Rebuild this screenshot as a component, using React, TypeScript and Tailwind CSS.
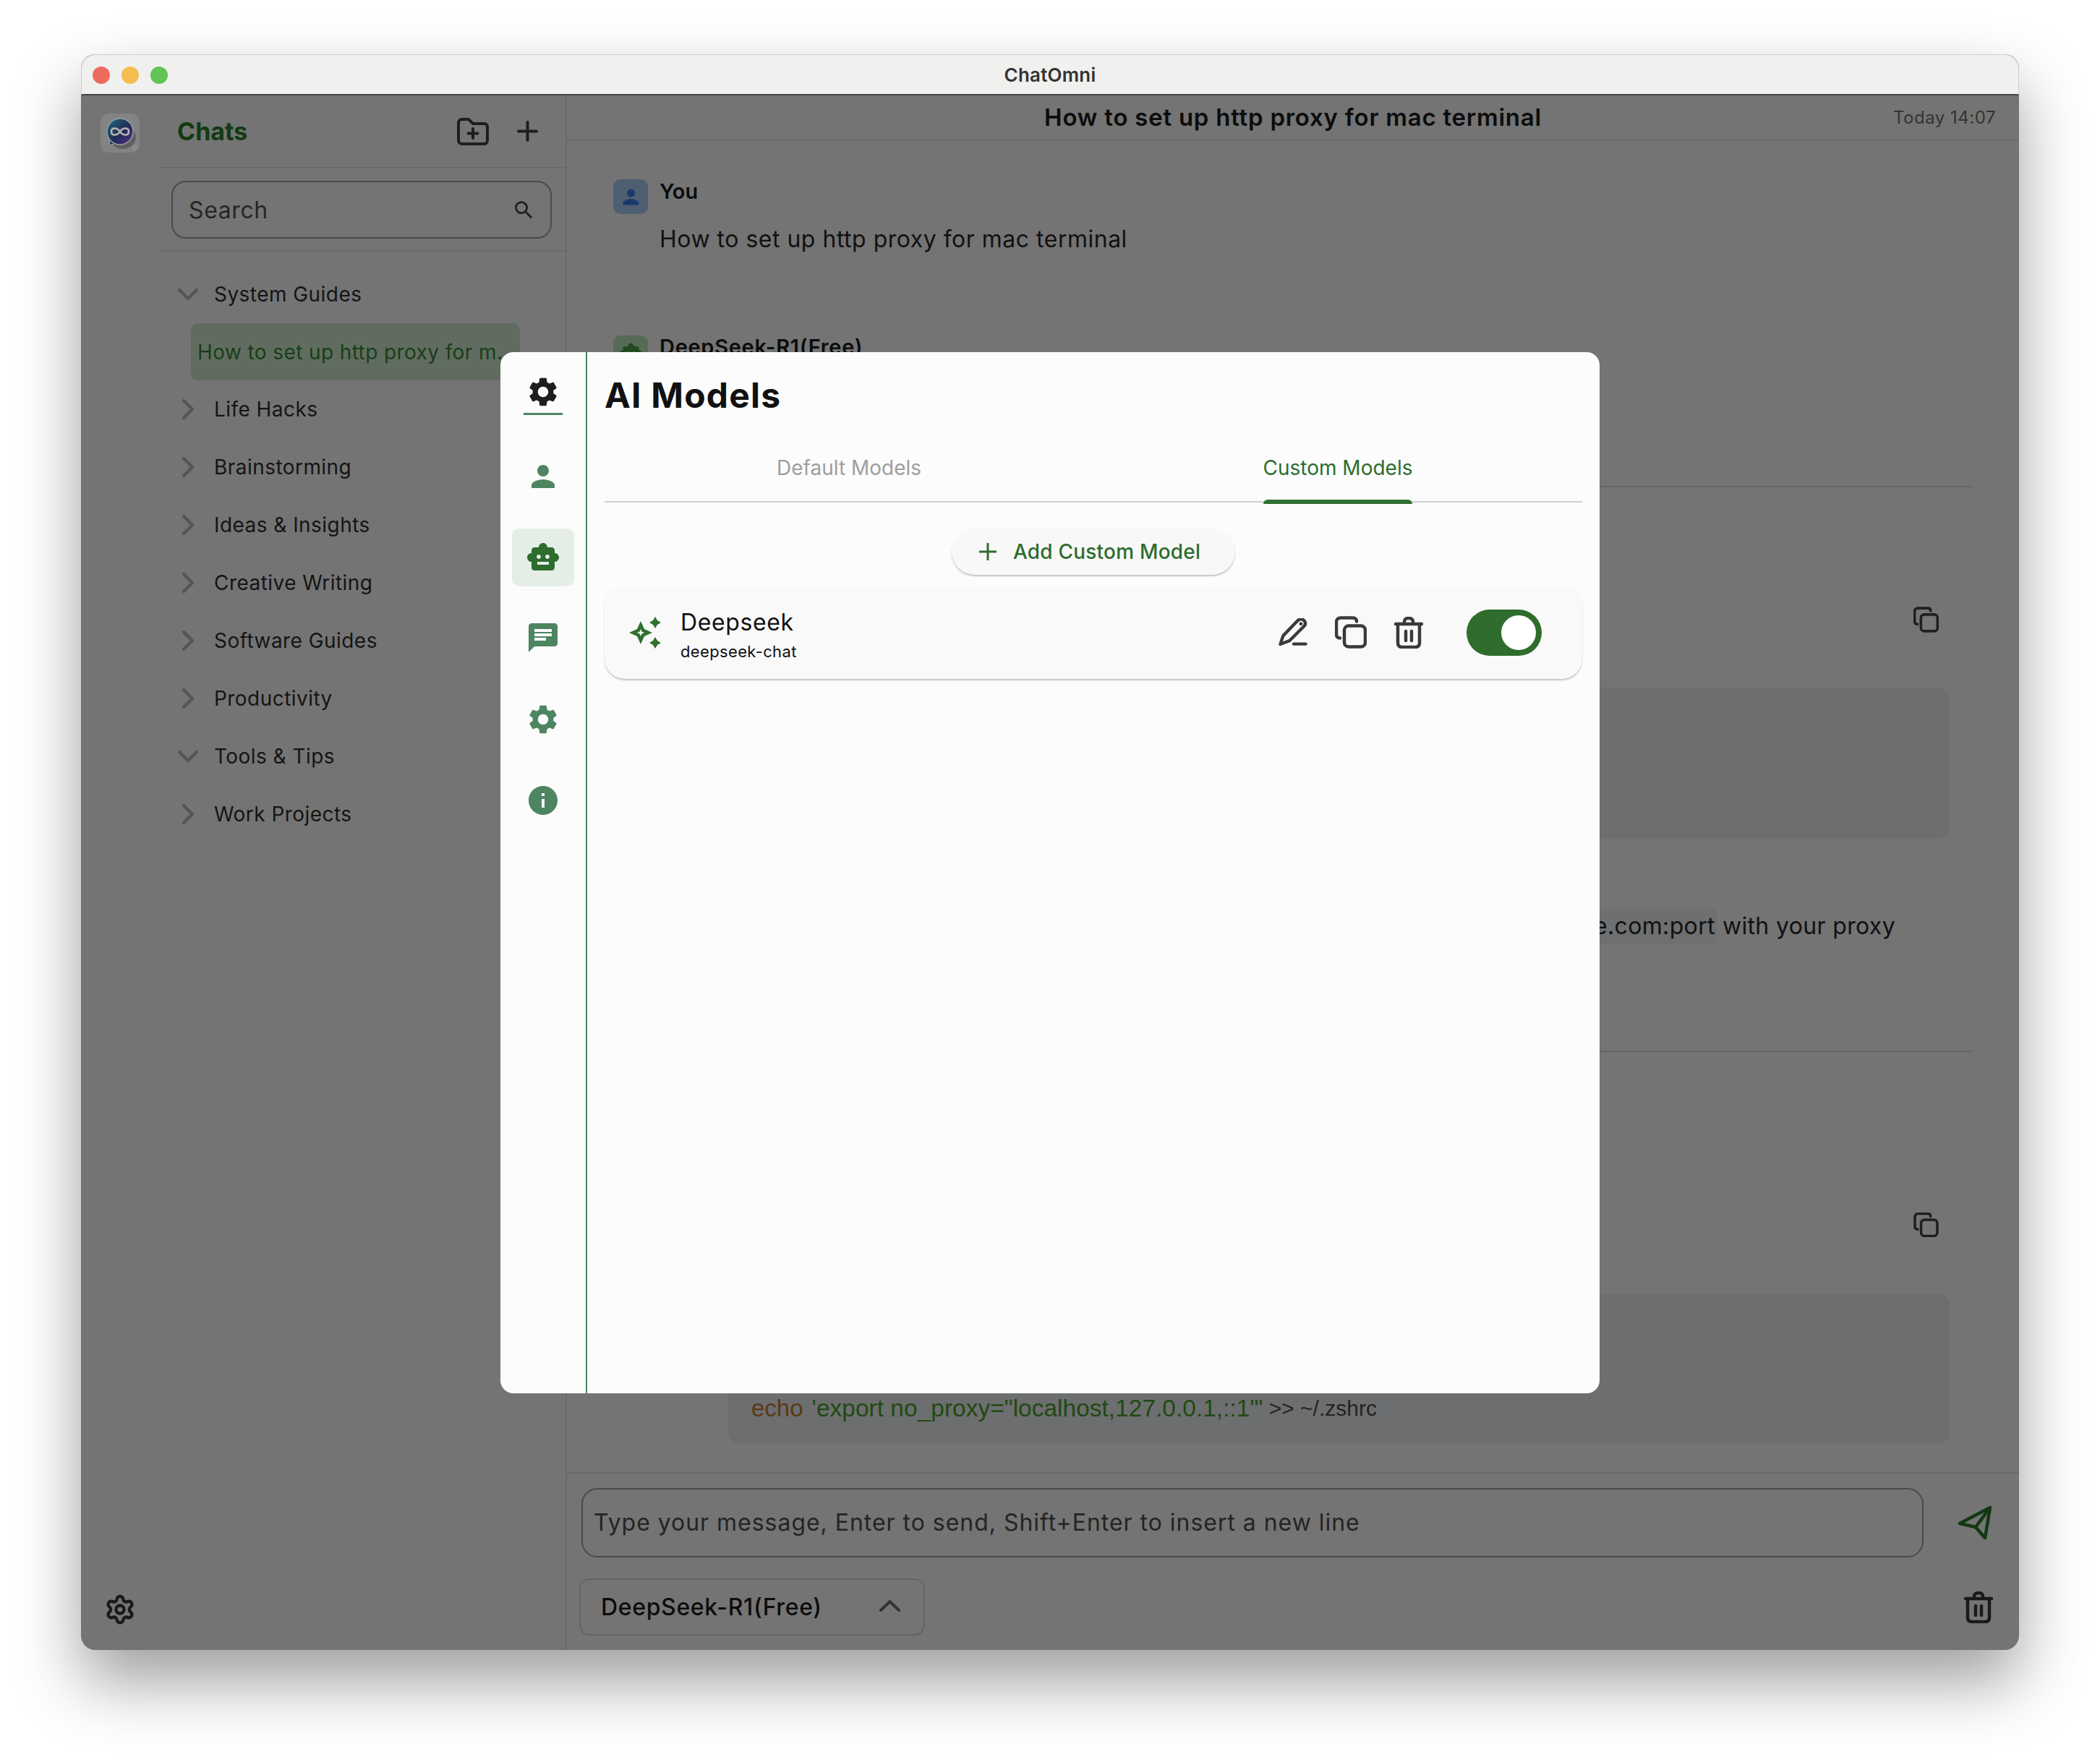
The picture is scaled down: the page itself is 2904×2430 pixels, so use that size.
import { Settings } from 'lucide-react';
import { MdChat, MdInfo, MdOutlineSearch, MdPerson, MdSettings, MdSmartToy } from 'react-icons/md';

const folders = [
  { name: 'System Guides', open: true },
  { name: 'Life Hacks' },
  { name: 'Brainstorming' },
  { name: 'Ideas & Insights' },
  { name: 'Creative Writing' },
  { name: 'Software Guides' },
  { name: 'Productivity' },
  { name: 'Tools & Tips', open: true },
  { name: 'Work Projects' },
];

const Logo = () => (
  <svg viewBox="0 0 54 54" className="h-[54px] w-[54px]">
    <defs>
      <linearGradient id="orb" x1="0" y1="0" x2="1" y2="1">
        <stop offset="0" stopColor="#1d6f7c" />
        <stop offset="0.55" stopColor="#232a55" />
        <stop offset="1" stopColor="#5b2f92" />
      </linearGradient>
    </defs>
    <rect width="54" height="54" rx="12" fill="#838383" />
    <ellipse cx="31" cy="33" rx="18" ry="16" fill="#5f5f5f" />
    <path d="M12 36 L13 44 L20 41 Z" fill="#2a3350" stroke="#a5a5a5" strokeWidth="1" />
    <circle cx="27" cy="25" r="18" fill="url(#orb)" stroke="#8fa0a8" strokeWidth="1.5" />
    <path d="M27 25 C23 19 15 19 15 25 C15 31 23 31 27 25 C31 19 39 19 39 25 C39 31 31 31 27 25 Z" fill="none" stroke="#b4b4b4" strokeWidth="2.6" />
    <path d="M47 43 L48 46 L51 47 L48 48 L47 51 L46 48 L43 47 L46 46 Z" fill="none" stroke="#9a9a9a" strokeWidth="0.8" />
  </svg>
);

const ChevronDownIcon = () => (
  <svg viewBox="0 0 28 16" className="h-[16px] w-[28px]" fill="none" stroke="#555555" strokeWidth="4.5" strokeLinecap="round" strokeLinejoin="round">
    <path d="M2 2 L14 14 L26 2" />
  </svg>
);

const ChevronRightIcon = () => (
  <svg viewBox="0 0 16 28" className="h-[28px] w-[16px]" fill="none" stroke="#555555" strokeWidth="4.5" strokeLinecap="round" strokeLinejoin="round">
    <path d="M2 2 L14 14 L2 26" />
  </svg>
);

const FolderPlusIcon = () => (
  <svg viewBox="0 0 44 38" className="h-[38px] w-[44px]" fill="none" stroke="#1e1e1e" strokeWidth="4" strokeLinecap="round" strokeLinejoin="round">
    <path d="M7 2 H16 L22 8 H38 C40.5 8 42 10 42 12 V31 C42 34 40 36 38 36 H7 C4 36 2 34 2 31 V7 C2 4 4 2 7 2 Z" />
    <path d="M22 15 V28 M15.5 21.5 H28.5" />
  </svg>
);

const PencilIcon = () => (
  <svg viewBox="0 0 40 40" className="h-[39px] w-[40px]" fill="none" stroke="#3a3a3a" strokeWidth="4.5" strokeLinecap="round" strokeLinejoin="round">
    <path d="M2 37 L6 25 L26 4 C29 1 33 1 35.5 3 C38 6 38 9 36 11 L15 32 Z" />
    <path d="M31 8 L31.5 8" />
    <path d="M21 36.5 H38" />
  </svg>
);

const CopyIcon = ({ className, color }: { className: string; color: string }) => (
  <svg viewBox="0 0 44 44" className={className} fill="none" stroke={color} strokeWidth="4.5" strokeLinecap="round" strokeLinejoin="round">
    <path d="M30 7 C30 4 28 2 25 2 H8 C4.5 2 2 4.5 2 8 V25 C2 28 4 30 7 30" />
    <rect x="13" y="13" width="29" height="29" rx="6" />
  </svg>
);

const TrashIcon = ({ color }: { color: string }) => (
  <svg viewBox="0 0 40 44" className="h-[44px] w-[40px]" fill="none" stroke={color} strokeWidth="4.5" strokeLinecap="round" strokeLinejoin="round">
    <path d="M2 10 H38" />
    <path d="M14 10 V7 C14 4 16 2 19 2 H21 C24 2 26 4 26 7 V10" />
    <path d="M5 10 V36 C5 40 7 42 11 42 H29 C33 42 35 40 35 36 V10" />
    <path d="M16 20 V33 M24 20 V33" />
  </svg>
);

const SparkleIcon = () => (
  <svg viewBox="0 0 44 45" className="h-[45px] w-[44px]" fill="#2f7030" fillRule="evenodd">
    <path d="M16 7 L21 18 L32 23 L21 28 L16 39 L11 28 L0 23 L11 18 Z M16 18 L14.5 21.5 L11 23 L14.5 24.5 L16 28 L17.5 24.5 L21 23 L17.5 21.5 Z" />
    <path d="M36 1 L39 6 L44 9 L39 12 L36 17 L33 12 L28 9 L33 6 Z" />
    <path d="M36 29 L39 34 L44 37 L39 40 L36 45 L33 40 L28 37 L33 34 Z" />
  </svg>
);

const SendIcon = () => (
  <svg viewBox="0 0 46 46" className="h-[46px] w-[46px]" fill="none" stroke="#123812" strokeWidth="4.5" strokeLinejoin="round" strokeLinecap="round">
    <path d="M44 2 L2 24 L24 29 L37 44 Z" />
    <path d="M44 2 L24 29" />
  </svg>
);

export default function App() {
  return (
    <div className="h-[2430px] w-[2904px] overflow-hidden bg-white pl-[112px] pt-[75px] font-['Inter',sans-serif]">
      <div className="relative flex h-[2207px] w-[2680px] flex-col rounded-[20px] bg-[#747474] shadow-[0_44px_90px_rgba(0,0,0,0.38)]">
        {/* title bar */}
        <div className="relative flex h-[57px] shrink-0 items-center justify-center rounded-t-[20px] border-x border-b-2 border-t border-x-[#cfcfcf] border-b-[#454545] border-t-[#cfcfcf] bg-[#f0f0ee]">
          <div className="absolute left-[15px] top-[16px] flex gap-[16px]">
            <span className="h-[24px] w-[24px] rounded-full bg-[#ee6a5f]" />
            <span className="h-[24px] w-[24px] rounded-full bg-[#f5bd4f]" />
            <span className="h-[24px] w-[24px] rounded-full bg-[#61c454]" />
          </div>
          <span className="text-[26px] font-semibold tracking-[0.2px] text-[#333333]">ChatOmni</span>
        </div>

        <div className="flex min-h-0 flex-1">
          {/* rail */}
          <div className="flex w-[108px] shrink-0 flex-col items-center justify-between pb-[34px] pt-[25px]">
            <Logo />
            <Settings size={44} strokeWidth={2.4} className="text-[#1a1a1a]" />
          </div>

          {/* sidebar */}
          <div className="w-[562px] shrink-0">
            <div className="flex h-[101px] items-center justify-between border-b-2 border-[#6a6a6a] pl-[25px] pr-[38px]">
              <span className="text-[34px] font-bold text-[#123a12]">Chats</span>
              <div className="flex items-center gap-[39px]">
                <FolderPlusIcon />
                <svg viewBox="0 0 29 29" className="h-[29px] w-[29px]" fill="none" stroke="#1e1e1e" strokeWidth="4" strokeLinecap="round">
                  <path d="M14.5 2 V27 M2 14.5 H27" />
                </svg>
              </div>
            </div>
            <div className="h-[115px] border-b-2 border-[#6a6a6a] pl-[17px] pt-[17px]">
              <div className="flex h-[80px] w-[526px] items-center justify-between rounded-[20px] border-2 border-[#4a4a4a] pl-[22px] pr-[20px]">
                <span className="pt-[2px] text-[32px] tracking-[0.6px] text-[#262626]">Search</span>
                <MdOutlineSearch size={33} className="text-[#1e1e1e]" />
              </div>
            </div>
            <div className="pt-[19px]">
              {folders.map((f) => (
                <div key={f.name}>
                  <div className="flex h-[80px] items-center pl-[20px]">
                    <div className="flex w-[40px] items-center justify-center">
                      {f.open ? <ChevronDownIcon /> : <ChevronRightIcon />}
                    </div>
                    <span className="ml-[16px] text-[28px] tracking-[0.45px] text-[#141414]">{f.name}</span>
                  </div>
                  {f.name === 'System Guides' && (
                    <div className="ml-[44px] flex h-[79px] w-[455px] items-center rounded-[10px] bg-[#616c60] pl-[9px]">
                      <span className="truncate text-[28px] tracking-[0.4px] text-[#163f16]">How to set up http proxy for mac terminal</span>
                    </div>
                  )}
                </div>
              ))}
            </div>
          </div>

          {/* chat */}
          <div className="flex min-w-0 flex-1 flex-col border-l-2 border-[#6a6a6a]">
            <div className="grid h-[63px] shrink-0 grid-cols-[1fr_auto_1fr] items-center border-b-2 border-[#6c6c6c]">
              <div />
              <span className="text-[33px] font-semibold tracking-[0.75px] text-[#0c0c0c]">How to set up http proxy for mac terminal</span>
              <span className="pr-[32px] text-right text-[24px] tracking-[0.5px] text-[#333333]">Today 14:07</span>
            </div>

            <div className="min-h-0 flex-1 overflow-hidden pl-[64px]">
              <div className="mt-[53px] flex h-[100px] gap-[16px]">
                <div className="flex h-[48px] w-[48px] items-center justify-center rounded-[10px] bg-[#4f5f72]">
                  <MdPerson size={33} className="text-[#1a3a6e]" />
                </div>
                <div>
                  <div className="text-[29px] font-semibold leading-[34px] text-[#0c0c0c]">You</div>
                  <div className="mt-[25px] text-[32px] leading-[48px] tracking-[0.5px] text-[#111111]">How to set up http proxy for mac terminal</div>
                </div>
              </div>

              <div className="mt-[116px] flex h-[48px] gap-[16px]">
                <div className="flex h-[48px] w-[48px] items-center justify-center rounded-[10px] bg-[#566b55]">
                  <MdSmartToy size={33} className="text-[#1f4a1f]" />
                </div>
                <div className="-mt-[1px] text-[29px] font-semibold leading-[34px] tracking-[0.7px] text-[#0c0c0c]">DeepSeek-R1(Free)</div>
              </div>

              <div className="mr-[64px] mt-[160px] h-[2px] bg-[#656565]" />

              <div className="mr-[111px] mt-[165px] flex h-[36px] justify-end">
                <CopyIcon className="h-[36px] w-[35px]" color="#1e1e1e" />
              </div>
              <div className="ml-[160px] mr-[96px] mt-[76px] h-[209px] rounded-[16px] bg-[#6d6e70]" />

              <div className="mr-[171px] mt-[99px] flex h-[44px] items-center justify-end whitespace-nowrap text-[32px] tracking-[0.35px] text-[#111111]">
                Replace <span className="mx-[8px] rounded-[6px] bg-[#6e6f70] px-[2px]">http://proxy.example.com:port</span> with your proxy
              </div>

              <div className="mr-[64px] mt-[150px] h-[2px] bg-[#656565]" />

              <div className="mr-[111px] mt-[222px] flex h-[34px] justify-end">
                <CopyIcon className="h-[34px] w-[35px]" color="#1e1e1e" />
              </div>
              <div className="ml-[159px] mr-[96px] mt-[78px] flex h-[208px] items-end rounded-[16px] bg-[#6d6e70] pb-[29px] pl-[32px] font-['Liberation_Sans',sans-serif] text-[33px] leading-[40px]">
                <span className="text-[#5a3a12]">echo</span>
                <span className="ml-[12px] text-[33.5px] text-[#1f4a10]">'export no_proxy="localhost,127.0.0.1,::1"'</span>
                <span className="ml-[8px] text-[30px] text-[#222222]">&gt;&gt; ~/.zshrc</span>
              </div>
            </div>

            {/* composer */}
            <div className="h-[246px] shrink-0 border-t-2 border-[#6a6a6a]">
              <div className="mt-[20px] flex items-center">
                <div className="ml-[20px] flex h-[96px] w-[1856px] items-center rounded-[22px] border-2 border-[#4a4a4a] pl-[15px]">
                  <span className="text-[32px] tracking-[0.97px] text-[#242424]">Type your message, Enter to send, Shift+Enter to insert a new line</span>
                </div>
                <div className="ml-[48px]">
                  <SendIcon />
                </div>
              </div>
              <div className="mt-[29px] flex items-center justify-between pl-[17px] pr-[36px]">
                <div className="flex h-[79px] w-[478px] items-center justify-between rounded-[14px] border-2 border-[#656565] pl-[28px] pr-[32px]">
                  <span className="text-[32px] font-medium tracking-[0.65px] text-[#0c0c0c]">DeepSeek-R1(Free)</span>
                  <svg viewBox="0 0 29 16" className="mb-[4px] h-[16px] w-[29px]" fill="none" stroke="#333333" strokeWidth="4" strokeLinecap="round" strokeLinejoin="round">
                    <path d="M2 14 L14.5 2 L27 14" />
                  </svg>
                </div>
                <TrashIcon color="#1a1a1a" />
              </div>
            </div>
          </div>
        </div>

        {/* settings dialog */}
        <div className="absolute left-[580px] top-[412px] flex h-[1440px] w-[1520px] rounded-[18px] bg-[#fcfcfc]">
          <div className="flex w-[120px] shrink-0 flex-col items-center border-r-2 border-[#4d8561] pt-[31px]">
            <div className="flex w-[54px] flex-col items-center border-b-[3px] border-[#4d8561] pb-[5px]">
              <MdSettings size={48} className="text-[#1e1e1e]" />
            </div>
            <MdPerson size={48} className="mt-[61px] text-[#4d8561]" />
            <div className="mt-[48px] flex h-[80px] w-[86px] items-center justify-center rounded-[10px] bg-[#e4eee7]">
              <MdSmartToy size={48} className="text-[#2d6d2d]" />
            </div>
            <MdChat size={48} className="mt-[47px] text-[#4d8561]" />
            <MdSettings size={48} className="mt-[65px] text-[#4d8561]" />
            <MdInfo size={48} className="mt-[64px] text-[#4d8561]" />
          </div>

          <div className="min-w-0 flex-1 pl-[24px] pr-[24px]">
            <div className="flex h-[128px] items-start pt-[30px] text-[48px] font-bold leading-[60px] tracking-[1.2px] text-[#111111]">AI Models</div>
            <div className="grid h-[80px] grid-cols-2 border-b-2 border-[#d0d0d0] text-[28px]">
              <div className="flex items-start justify-center pt-[11px] text-[#9e9e9e]">Default Models</div>
              <div className="flex items-start justify-center">
                <div className="flex h-[80px] flex-col items-center justify-between pt-[11px] text-[#2d6d2d]">
                  <span>Custom Models</span>
                  <span className="-mb-[2px] h-[6px] w-[206px] rounded-t-[6px] bg-[#2f6f2f]" />
                </div>
              </div>
            </div>
            <div className="flex justify-center pt-[36px]">
              <div className="flex h-[64px] w-[392px] items-center gap-[23px] rounded-full bg-[#f8f8f8] pl-[38px] text-[28px] font-medium tracking-[0.2px] text-[#2d6d2d] shadow-[0_2px_2px_rgba(0,0,0,0.22)]">
                <svg viewBox="0 0 24 24" className="h-[24px] w-[24px]" fill="none" stroke="#2d6d2d" strokeWidth="3">
                  <path d="M12 0 V24 M0 12 H24" />
                </svg>
                <span>Add Custom Model</span>
              </div>
            </div>
            <div className="mt-[15px] flex h-[129px] items-center rounded-[28px] bg-[#f9f9f9] pl-[34px] shadow-[0_2px_2px_rgba(0,0,0,0.22)]">
              <SparkleIcon />
              <div className="ml-[27px] mt-[8px]">
                <div className="text-[32px] leading-[40px] tracking-[0.6px] text-[#111111]">Deepseek</div>
                <div className="mt-[5px] text-[22px] leading-[30px] tracking-[0.35px] text-[#111111]">deepseek-chat</div>
              </div>
              <div className="ml-auto flex items-center pr-[56px]">
                <PencilIcon />
                <div className="ml-[38px]">
                  <CopyIcon className="h-[45px] w-[44px]" color="#3a3a3a" />
                </div>
                <div className="ml-[38px]">
                  <TrashIcon color="#3a3a3a" />
                </div>
                <div className="ml-[60px] flex h-[64px] w-[104px] items-center justify-end rounded-full bg-[#2f6d2d] pr-[8px]">
                  <span className="h-[48px] w-[48px] rounded-full bg-white" />
                </div>
              </div>
            </div>
          </div>
        </div>
      </div>
    </div>
  );
}
